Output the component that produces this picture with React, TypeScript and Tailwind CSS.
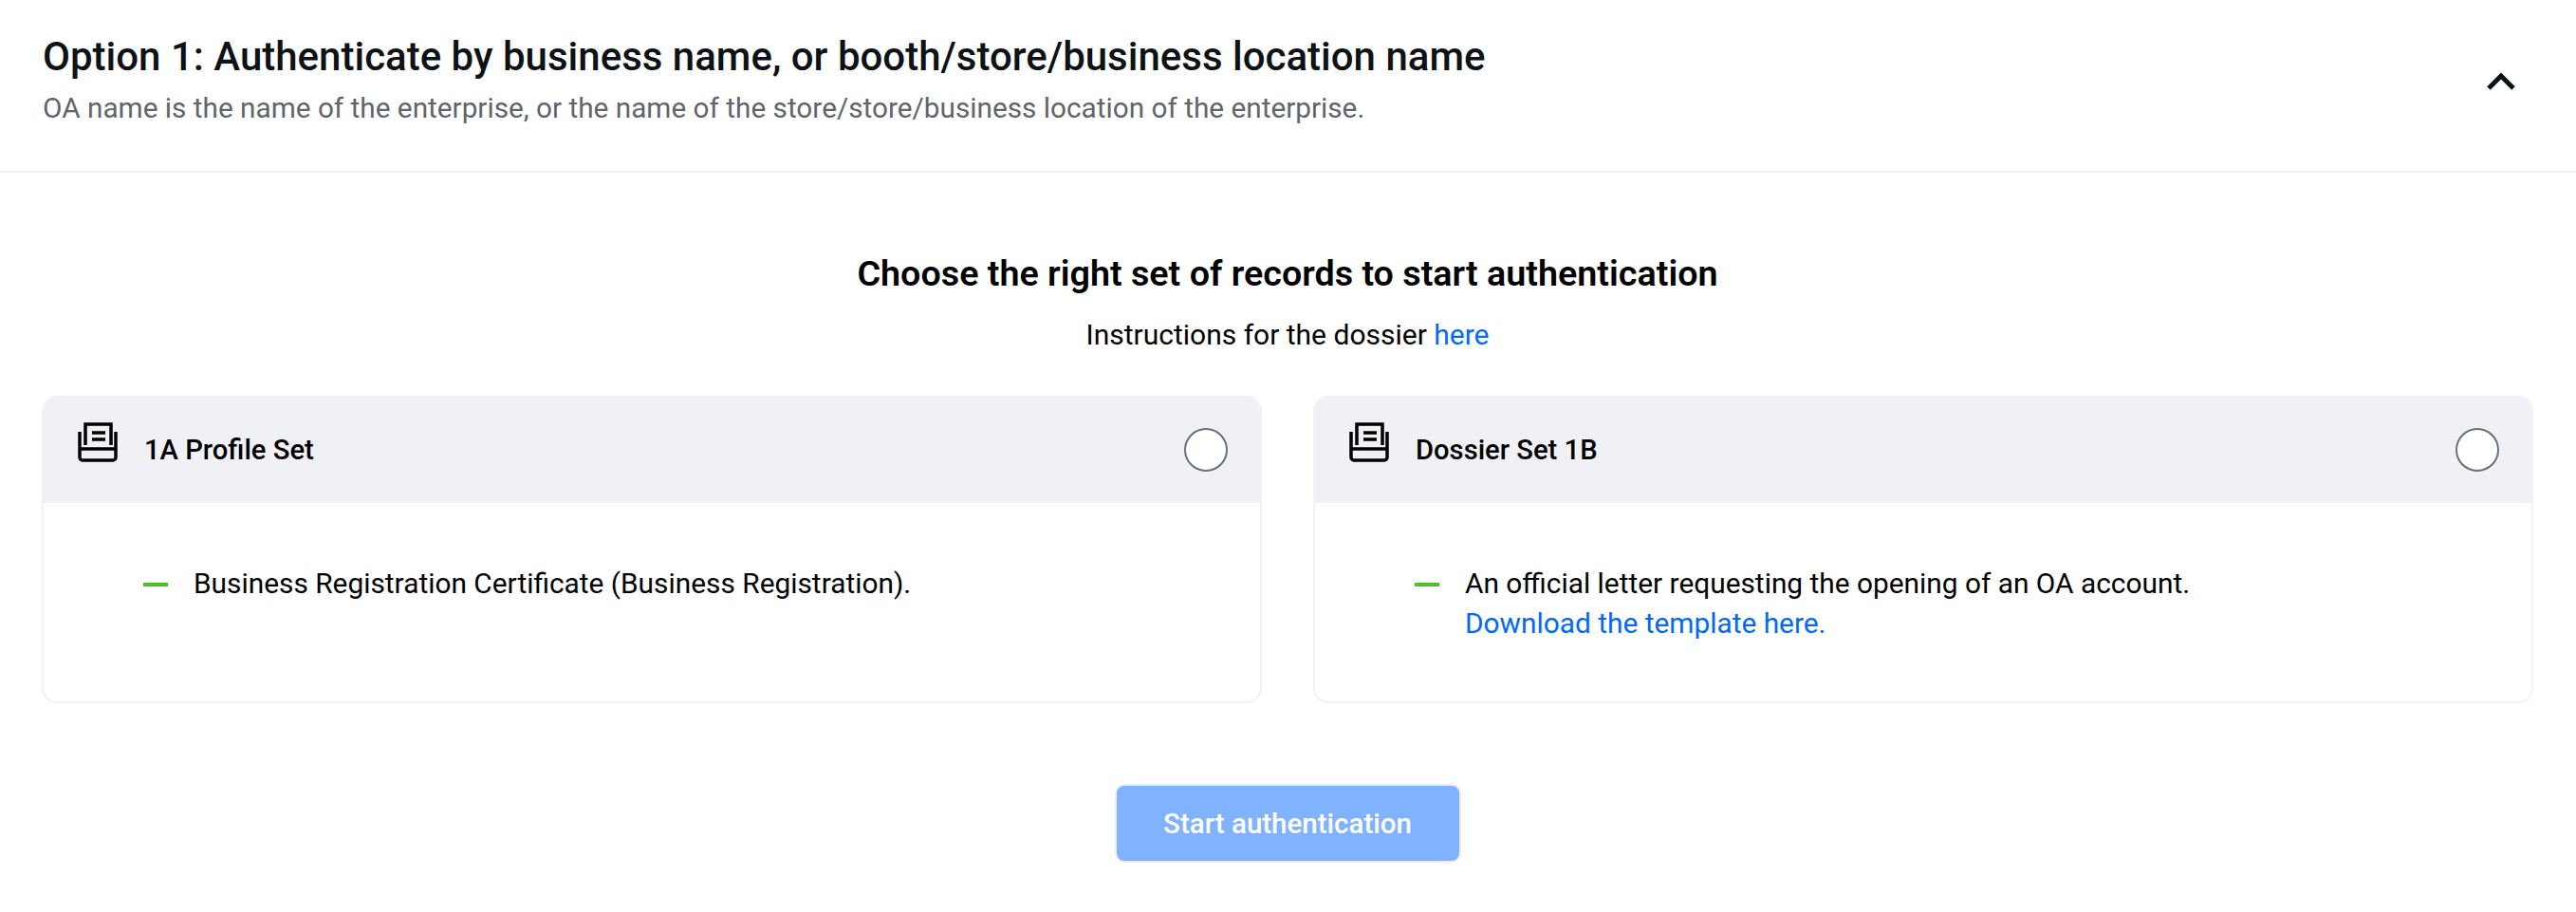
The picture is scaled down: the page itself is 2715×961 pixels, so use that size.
const DossierIcon = () => (
  <svg width="42" height="42" viewBox="0 0 42 42" fill="none" stroke="currentColor" strokeWidth="3.5" className="shrink-0">
    <path d="M2 10V37a3 3 0 0 0 3 3H37a3 3 0 0 0 3-3V10" />
    <path d="M2 28H40" />
    <path d="M8 24V2H35V24" />
    <path d="M15 11H29M15 18H29" />
  </svg>
);

const ProfileCard = ({ title, children }: { title: string; children: React.ReactNode }) => (
  <div className="flex h-[324px] flex-1 flex-col overflow-hidden rounded-2xl border-2 border-[#f1f2f5]">
    <div className="-mx-[2px] -mt-[2px] flex h-[113px] shrink-0 items-center justify-between bg-[#f0f1f5] pl-[38px] pr-[36px]">
      <div className="flex items-center gap-[28px]">
        <div className="-mt-[15px] text-black">
          <DossierIcon />
        </div>
        <span className="pt-[2px] text-[29.2px] font-medium text-black">{title}</span>
      </div>
      <span className="h-[46px] w-[46px] rounded-full border-2 border-[#6b6f76] bg-white" />
    </div>
    <div className="flex gap-[27px] pl-[105px] pt-[64px]">
      <span className="mt-[20px] h-[4px] w-[26px] shrink-0 bg-[#4fbf26]" />
      <div className="text-[29.85px] leading-[42px] text-black">{children}</div>
    </div>
  </div>
);

export default function App() {
  return (
    <div className="h-[961px] w-[2715px] bg-white font-['Roboto',sans-serif]">
      <div className="flex h-[182px] items-center justify-between border-b-2 border-[#f1f2f4] pl-[45px] pr-[64px]">
        <div className="-mt-[13px]">
          <h1 className="text-[42px] font-medium leading-[56px] text-[#0d1217]">
            Option 1: Authenticate by business name, or booth/store/business location name
          </h1>
          <p className="mt-[5px] text-[29.75px] leading-[42px] text-[#5f656d]">
            OA name is the name of the enterprise, or the name of the store/store/business location of the enterprise.
          </p>
        </div>
        <svg width="30" height="20" viewBox="0 0 30 20" fill="none" stroke="#0d1217" strokeWidth="5" className="-mt-[8px]">
          <path d="M2 17L15 4L28 17" />
        </svg>
      </div>
      <div className="pl-[44px] pr-[45px] pt-[82px]">
        <h2 className="text-center text-[37.7px] font-semibold leading-[48px] text-black">
          Choose the right set of records to start authentication
        </h2>
        <p className="mt-[21px] text-center text-[30px] leading-[40px] text-black">
          Instructions for the dossier <a className="text-[#0068ff]">here</a>
        </p>
        <div className="mt-[44px] flex gap-[54px]">
          <ProfileCard title="1A Profile Set">Business Registration Certificate (Business Registration).</ProfileCard>
          <ProfileCard title="Dossier Set 1B">
            An official letter requesting the opening of an OA account.
            <br />
            <a className="text-[#0068ff]">Download the template here.</a>
          </ProfileCard>
        </div>
        <div className="mt-[85px] flex justify-center">
          <button className="h-[83px] w-[365px] rounded-[10px] border-2 border-[#eeeeee] bg-[#80b2ff] pt-[2px] text-[29.5px] font-medium text-white">
            Start authentication
          </button>
        </div>
      </div>
    </div>
  );
}
